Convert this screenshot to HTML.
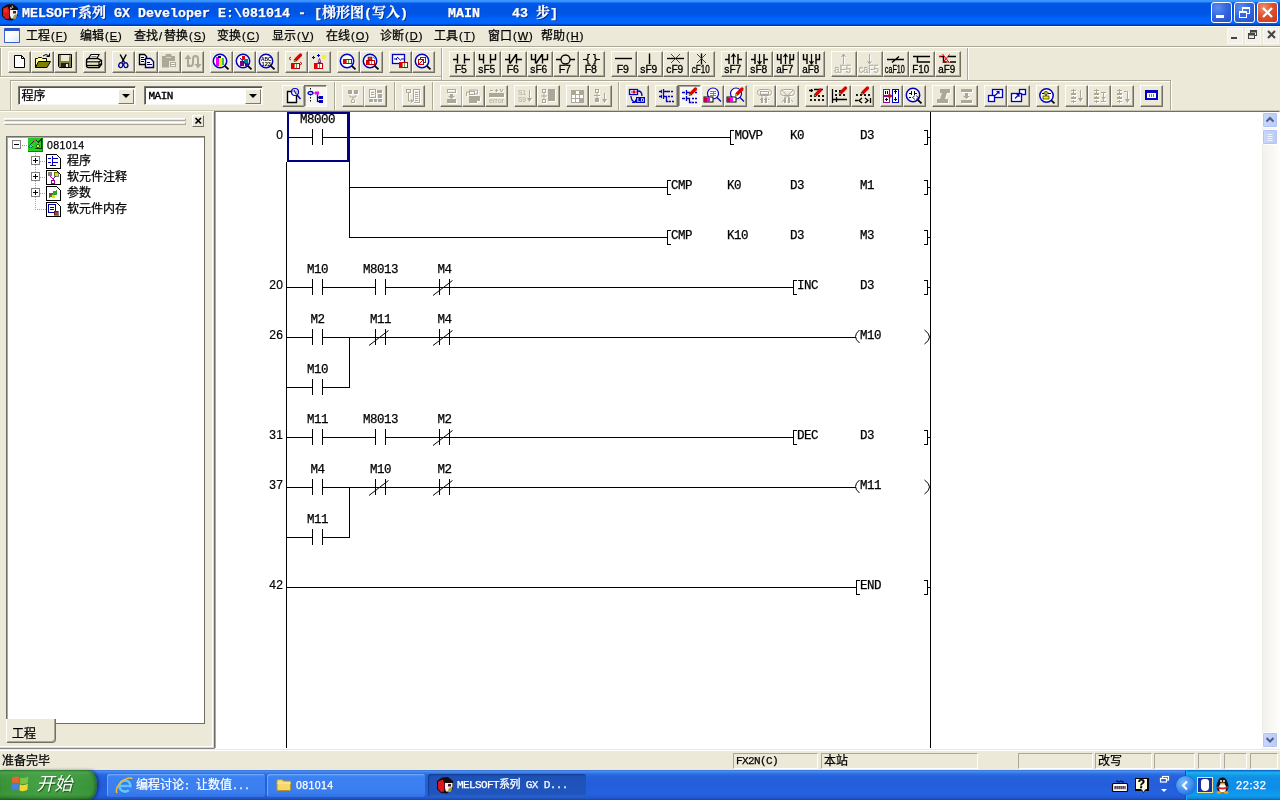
<!DOCTYPE html>
<html lang="zh-CN"><head><meta charset="utf-8"><title>MELSOFT GX Developer</title>
<style>
*{box-sizing:border-box;margin:0;padding:0}
html,body{width:1280px;height:800px;overflow:hidden;background:#ECE9D8}
body{-webkit-text-stroke-width:.25px;position:relative;font-family:"Liberation Sans","Noto Sans CJK SC",sans-serif;font-size:12px;color:#000}
#root{position:absolute;left:0;top:0;width:1280px;height:800px;will-change:transform}
.abs{position:absolute}
#title{left:0;top:0;width:1280px;height:26px;background:linear-gradient(to bottom,#3B97FF 0px,#3B97FF 1.300px,#1A72F2 2.500px,#0559E8 3.500px,#0055E5 5px,#0055E5 14px,#005BEF 16px,#0064FA 19px,#0066FF 23px,#0058E6 24px,#003DB4 25px,#00309C 26px)}
#title .t{left:22px;top:3px;height:20px;line-height:20px;color:#fff;font-weight:bold;font-size:14px;white-space:pre;font-family:"Liberation Serif","Noto Serif CJK SC",serif;text-shadow:1px 1px 0 #0A2A80}
#title .t .l{font-family:"Liberation Mono",monospace;font-size:13.333px;display:inline-block;line-height:20px;transform:scaleY(1.0);transform-origin:0 70%}
.wb{top:2px;width:21px;height:21px;border:1px solid #fff;border-radius:3px;background:radial-gradient(circle at 30% 25%,#5B8DF0 0%,#3667E0 45%,#2250C8 100%)}
.wb.c{background:radial-gradient(circle at 30% 25%,#F09070 0%,#E0502C 45%,#C23A18 100%)}
#menu{left:0;top:26px;width:1280px;height:20px;background:#ECE9D8;border-top:1px solid #fff}
#menu>span{position:absolute;top:2px;height:14px;line-height:14px;font-size:12px;white-space:pre}
.ml{font-family:"Liberation Sans",sans-serif;font-size:11px;letter-spacing:1px;margin-left:1px}
.ml u{text-underline-offset:1px}
.btn{position:absolute;border:1px solid;border-color:#fff #716F64 #716F64 #fff;background:#ECE9D8;box-shadow:inset -1px -1px 0 #ACA899}
.btn.p{border-color:#716F64 #fff #fff #716F64;background:#F8F7F1;box-shadow:inset 1px 1px 0 #ACA899}
.btn svg{position:absolute;left:-1px;top:-1px}
.hl{position:absolute;height:2px;border-top:1px solid #ACA899;border-bottom:1px solid #fff}
.vl{position:absolute;width:2px;border-left:1px solid #ACA899;border-right:1px solid #fff}
.combo{position:absolute;background:#fff;border:1px solid;border-color:#7B7A6E #F6F5EE #F6F5EE #7B7A6E;box-shadow:inset 1px 1px 0 #55544A}
.combo .tx{position:absolute;left:2.500px;top:1.500px;line-height:15px;font-size:12px}
.combo .dd{position:absolute;right:1px;top:2px;width:16px;height:15px;background:#ECE9D8;border:1px solid;border-color:#fff #7B7A6E #7B7A6E #fff}
.combo .dd:after{content:"";position:absolute;left:3px;top:4px;border:4px solid transparent;border-top:4px solid #000;border-bottom:0}
</style></head>
<body>
<div id="root">
<div id="title" class="abs"><svg class="abs" style="left:1px;top:3px" width="18" height="18" viewBox="0 0 18 18"><polygon points="1,5 6,1.500 12,1 17,5 17,12.500 11,17.500 5,17 1,13" fill="#1a0808"/><polygon points="2,5.500 7,3.500 8.500,9 8,15.500 5,16 2,12.500" fill="#D8181C"/><polygon points="3,6 6,5 6.500,9 3.500,10" fill="#F03020"/><path d="M9 7h7.500v3.500l-2 5h-4.500l-1-3z" fill="#F4F0F0"/><path d="M12 8h3v2.500h-3z" fill="#402030"/><path d="M13 12l3.500-1l-2 4.500l-3 .5z" fill="#A8A040"/><path d="M11 2l1.500 2.500l-2 .5z" fill="#A0E0A0"/><path d="M9 4l2 1.500l-1.500 1z" fill="#fff"/></svg><div class="t abs"><span class="l">MELSOFT</span>系列<span class="l"> GX Developer E:\081014 - [</span>梯形图<span class="l">(</span>写入<span class="l">)     MAIN    43 </span>步<span class="l">]</span></div><div class="wb abs" style="left:1211px"><div class="abs" style="left:4px;top:12px;width:8px;height:3px;background:#fff"></div></div><div class="wb abs" style="left:1234px"><div class="abs" style="left:7px;top:4px;width:8px;height:7px;border:1px solid #fff;border-top-width:2px"></div><div class="abs" style="left:4px;top:8px;width:8px;height:7px;border:1px solid #fff;border-top-width:2px;background:#3667E0"></div></div><div class="wb c abs" style="left:1257px"><svg width="19" height="19" viewBox="0 0 19 19"><path d="M5 5L14 14M14 5L5 14" stroke="#fff" stroke-width="2.2"/></svg></div></div>
<div id="menu" class="abs"><div class="abs" style="left:4px;top:1px;width:16px;height:15px;background:linear-gradient(135deg,#fff 40%,#DCE6FA);border:1px solid #3A66D0;border-top:3px solid #2A55C8;border-radius:1px"></div><span style="left:26px">工程<span class="ml">(<u>F</u>)</span></span><span style="left:80px">编辑<span class="ml">(<u>E</u>)</span></span><span style="left:134px">查找<span class="ml" style="margin:0 1px">/</span>替换<span class="ml">(<u>S</u>)</span></span><span style="left:217px">变换<span class="ml">(<u>C</u>)</span></span><span style="left:272px">显示<span class="ml">(<u>V</u>)</span></span><span style="left:326px">在线<span class="ml">(<u>O</u>)</span></span><span style="left:380px">诊断<span class="ml">(<u>D</u>)</span></span><span style="left:434px">工具<span class="ml">(<u>T</u>)</span></span><span style="left:488px">窗口<span class="ml">(<u>W</u>)</span></span><span style="left:541px">帮助<span class="ml">(<u>H</u>)</span></span><div class="abs" style="left:1227px;top:1px;width:16px;height:16px;background:#F2F0E8;border:1px solid #FAF9F5"></div><div class="abs" style="left:1245px;top:1px;width:16px;height:16px;background:#F2F0E8;border:1px solid #FAF9F5"></div><div class="abs" style="left:1263px;top:1px;width:16px;height:16px;background:#F2F0E8;border:1px solid #FAF9F5"></div><svg class="abs" style="left:1224px;top:-2px" width="56" height="18" viewBox="0 0 56 18">
<rect x="7" y="12" width="6" height="2" fill="#444"/>
<g fill="none" stroke="#444"><rect x="26.5" y="5.500" width="6" height="5" /><path d="M26 6.500h7" stroke-width="2"/><rect x="24.500" y="8.500" width="6" height="5" fill="#ECE9D8"/><path d="M24 9.500h7" stroke-width="2"/></g>
<path d="M44 6l7 7M51 6l-7 7" stroke="#444" stroke-width="2"/></svg></div>
<div class="abs" style="left:0px;top:46px;width:1280px;height:1px;background:#ACA899"></div><div class="abs" style="left:0px;top:47px;width:1280px;height:1px;background:#fff"></div><div class="abs" style="left:0px;top:48px;width:1px;height:28px;background:#ACA899"></div><div class="abs" style="left:1px;top:48px;width:1px;height:28px;background:#fff"></div><div class="abs" style="left:0px;top:76px;width:442px;height:1px;background:#ACA899"></div><div class="abs" style="left:0px;top:77px;width:442px;height:1px;background:#fff"></div><div class="abs" style="left:441px;top:48px;width:1px;height:33px;background:#ACA899"></div><div class="abs" style="left:442px;top:48px;width:1px;height:32px;background:#fff"></div><div class="btn" style="left:8px;top:51px;width:23px;height:22px"><svg width="23" height="22" viewBox="0 0 23 22"><path d="M6.500 4.500h7l3 3v9h-10z" fill="#fff" stroke="#000"/><path d="M13.500 4.500v3h3" fill="none" stroke="#000"/></svg></div><div class="btn" style="left:31px;top:51px;width:23px;height:22px"><svg width="23" height="22" viewBox="0 0 23 22"><path d="M4.500 16.500v-9h2l1-1h3l1 1h4v3" fill="#FFFF99" stroke="#000"/><path d="M4.500 16.500l3-6h12l-3.500 6z" fill="#808000" stroke="#000"/><path d="M12 5q3-3 6 0" fill="none" stroke="#000"/><path d="M18.500 2.500v3h-3" fill="none" stroke="#000"/></svg></div><div class="btn" style="left:54px;top:51px;width:23px;height:22px"><svg width="23" height="22" viewBox="0 0 23 22"><path d="M4.500 3.500h13v13h-12l-1-1z" fill="#808040" stroke="#000"/><rect x="7" y="4" width="8" height="6" fill="#ECE9D8"/><rect x="7" y="12" width="8" height="4" fill="#202020"/><rect x="12" y="13" width="2" height="3" fill="#ECE9D8"/><rect x="15.500" y="4.500" width="1" height="1" fill="#fff"/></svg></div><div class="btn" style="left:83px;top:51px;width:23px;height:22px"><svg width="23" height="22" viewBox="0 0 23 22"><path d="M8 3.500h8l-2 4h-8.500z" fill="#fff" stroke="#000" stroke-width="1.200"/><path d="M8.500 5.500h5" stroke="#808080"/><path d="M3.500 10q0-2.500 2-2.500h9l4 2v4l-2.500 3h-10.500q-2 0-2-2z" fill="#F4F2E8" stroke="#000" stroke-width="1.300"/><path d="M4 10.800h12l2.500-1.300M4 14.300h12l2.500-1.800M16 10.800v5.500" stroke="#000" stroke-width="1.200" fill="none"/><path d="M5.500 12.600h9" stroke="#F0F060" stroke-width="1.600"/></svg></div><div class="btn" style="left:112px;top:51px;width:23px;height:22px"><svg width="23" height="22" viewBox="0 0 23 22"><path d="M8.200 3.500l4.300 8M14.200 3.500l-4.300 8" stroke="#000" stroke-width="1.500" fill="none"/><ellipse cx="8.800" cy="14.200" rx="2" ry="2.400" fill="none" stroke="#000090" stroke-width="1.300" transform="rotate(20 8.800 14.200)"/><ellipse cx="13.800" cy="14.200" rx="2" ry="2.400" fill="none" stroke="#000090" stroke-width="1.300" transform="rotate(-20 13.800 14.200)"/></svg></div><div class="btn" style="left:135px;top:51px;width:23px;height:22px"><svg width="23" height="22" viewBox="0 0 23 22"><path d="M4.500 3.500h5l2 2v8h-7z" fill="#fff" stroke="#000" stroke-width="1.400"/><path d="M6 6.500h3M6 8.500h4M6 10.500h3" stroke="#000"/><path d="M10.500 7.500h5l3 3v6h-8z" fill="#fff" stroke="#000060" stroke-width="1.400"/><path d="M12 11.500h3M12 13.500h5" stroke="#000060"/></svg></div><div class="btn" style="left:158px;top:51px;width:23px;height:22px"><svg width="23" height="22" viewBox="0 0 23 22"><path d="M4 5h13v11.500h-13z" fill="#ACA899"/><rect x="7.500" y="3" width="6" height="3.500" rx="1" fill="#ACA899"/><path d="M8 6.500h5" stroke="#D8D4C4"/><rect x="11.500" y="10.500" width="7" height="6" fill="#ACA899" stroke="#ECE9D8"/><path d="M13 12.500h4M13 14.500h4" stroke="#fff"/></svg></div><div class="btn" style="left:181px;top:51px;width:23px;height:22px"><svg width="23" height="22" viewBox="0 0 23 22"><path d="M7 16v-9.500M7 12q0 3 2.500 3t2.500-3v-4q0-3 2.500-3t2.500 3v6" fill="none" stroke="#ACA899" stroke-width="2"/><path d="M3.500 8l3.500-4.500l3.500 4.500zM13.500 13l3.500 4.500l3.500-4.500z" fill="#ACA899"/></svg></div><div class="btn" style="left:210px;top:51px;width:23px;height:22px"><svg width="23" height="22" viewBox="0 0 23 22"><circle cx="10" cy="10" r="6.7" fill="#fff" stroke="#0000C0" stroke-width="1.5"/><rect x="6" y="6" width="3" height="9" fill="#F000F0"/><rect x="9" y="7" width="3" height="9" fill="#F0F000"/><rect x="12" y="7" width="2" height="7" fill="#40C040"/><rect x="8" y="5" width="3" height="2" fill="#000080"/><path d="M14.824 14.824L18.500 18.300" stroke="#000" stroke-width="1.800"/></svg></div><div class="btn" style="left:233px;top:51px;width:23px;height:22px"><svg width="23" height="22" viewBox="0 0 23 22"><circle cx="10" cy="10" r="6.7" fill="#fff" stroke="#0000C0" stroke-width="1.5"/><path d="M9 5h3v4h-3z" fill="#E00000"/><path d="M11 8h4v4h-4z" fill="#008080"/><path d="M7 10h4v5h-4zM12 12h3v3h-3z" fill="#800080"/><path d="M7 7l8 9" stroke="#000080"/><path d="M14.824 14.824L18.500 18.300" stroke="#000" stroke-width="1.800"/></svg></div><div class="btn" style="left:256px;top:51px;width:23px;height:22px"><svg width="23" height="22" viewBox="0 0 23 22"><circle cx="10" cy="10" r="6.7" fill="#fff" stroke="#0000C0" stroke-width="1.5"/><g font-family="'Liberation Sans',sans-serif" font-size="6.200" font-weight="bold" fill="#000"><text x="5" y="9.800" textLength="10.500" lengthAdjust="spacingAndGlyphs">ABC</text><text x="5.500" y="15" textLength="9.500" lengthAdjust="spacingAndGlyphs">123</text></g><path d="M14.824 14.824L18.500 18.300" stroke="#000" stroke-width="1.800"/></svg></div><div class="btn" style="left:285px;top:51px;width:23px;height:22px"><svg width="23" height="22" viewBox="0 0 23 22"><path d="M11 8.5L15.5 4" stroke="#E00000" stroke-width="3.2" stroke-linecap="round"/><path d="M9 10.5l2.500 -0.500l-2 -2z" fill="#FFE000" stroke="#000" stroke-width=".5"/><rect x="6.5" y="12.5" width="8" height="5" fill="#fff" stroke="#C00000"/><rect x="6" y="12" width="3.6" height="6" fill="#E00000"/><path d="M11.58 13v4" stroke="#40A040"/><path d="M6 6l-2 1.500l2 1.500M15 11l2 1.500l-2 1.500" fill="none" stroke="#E00000"/></svg></div><div class="btn" style="left:308px;top:51px;width:23px;height:22px"><svg width="23" height="22" viewBox="0 0 23 22"><rect x="6.5" y="12.5" width="8" height="5" fill="#fff" stroke="#C00000"/><rect x="6" y="12" width="3.6" height="6" fill="#E00000"/><path d="M11.58 13v4" stroke="#40A040"/><path d="M10 11.500h3l-1.500-4z" fill="#FFE000" stroke="#800080" stroke-width=".8"/><path d="M11.500 11v2" stroke="#800080"/><circle cx="16" cy="6" r="2.200" fill="#F0F040"/><path d="M5.500 5v3M4 6.500h3M10.500 3v3M9 4.500h3" stroke="#0000C0"/></svg></div><div class="btn" style="left:337px;top:51px;width:23px;height:22px"><svg width="23" height="22" viewBox="0 0 23 22"><circle cx="10" cy="10" r="6.7" fill="#fff" stroke="#0000C0" stroke-width="1.5"/><rect x="6.5" y="8.5" width="8" height="4" fill="#fff" stroke="#C00000"/><rect x="6" y="8" width="3.6" height="5" fill="#E00000"/><path d="M11.58 9v3" stroke="#40A040"/><path d="M14.824 14.824L18.500 18.300" stroke="#000" stroke-width="1.800"/></svg></div><div class="btn" style="left:360px;top:51px;width:23px;height:22px"><svg width="23" height="22" viewBox="0 0 23 22"><circle cx="10" cy="10" r="6.7" fill="#fff" stroke="#0000C0" stroke-width="1.5"/><rect x="6.5" y="9.5" width="8" height="4" fill="#fff" stroke="#C00000"/><rect x="6" y="9" width="3.6" height="5" fill="#E00000"/><path d="M11.58 10v3" stroke="#40A040"/><rect x="8" y="6" width="4" height="3" fill="#E04020" stroke="#000" stroke-width=".5"/><path d="M13 6l2 2" stroke="#40A0E0"/><path d="M14.824 14.824L18.500 18.300" stroke="#000" stroke-width="1.800"/></svg></div><div class="btn" style="left:389px;top:51px;width:23px;height:22px"><svg width="23" height="22" viewBox="0 0 23 22"><rect x="3.500" y="3.500" width="12" height="9" fill="#fff" stroke="#0000C0" stroke-width="1.300"/><path d="M5 8h3M8 6l4 3.500M12 8h3" stroke="#0000C0" fill="none"/><path d="M7 6.500l1.500 1.500l-1.500 1.500z" fill="#0000C0"/><rect x="10.5" y="11.5" width="8" height="5" fill="#fff" stroke="#C00000"/><rect x="10" y="11" width="3.6" height="6" fill="#E00000"/><path d="M15.58 12v4" stroke="#40A040"/></svg></div><div class="btn" style="left:412px;top:51px;width:23px;height:22px"><svg width="23" height="22" viewBox="0 0 23 22"><circle cx="10" cy="10" r="6.7" fill="#fff" stroke="#0000C0" stroke-width="1.5"/><rect x="8.500" y="6.500" width="5" height="5" fill="#fff" stroke="#404040"/><rect x="6.500" y="8.500" width="5" height="5" fill="#fff" stroke="#C00000"/><path d="M7 13l4-4" stroke="#E00000"/><path d="M14.824 14.824L18.500 18.300" stroke="#000" stroke-width="1.800"/></svg></div><div class="btn" style="left:449px;top:51px;width:26px;height:26px"><svg width="26" height="26" viewBox="0 0 26 26"><path d="M4 8.500h4.500M15.500 8.500h5.500M8.500 3v9.500M15.500 3v9.500" stroke="#000" stroke-width="1.4" fill="none" /><text x="11.800" y="21.500" text-anchor="middle" font-family="'Liberation Sans',sans-serif" font-size="10.500" fill="#000" stroke="#000" stroke-width=".3">F5</text></svg></div><div class="btn" style="left:475px;top:51px;width:26px;height:26px"><svg width="26" height="26" viewBox="0 0 26 26"><path d="M4.500 3v5.500h4M8.500 3v9.500M15.500 3v9.500M15.500 8.500h5v-5.500" stroke="#000" stroke-width="1.4" fill="none" /><text x="11.800" y="21.500" text-anchor="middle" font-family="'Liberation Sans',sans-serif" font-size="10.500" fill="#000" stroke="#000" stroke-width=".3" textLength="17" lengthAdjust="spacingAndGlyphs">sF5</text></svg></div><div class="btn" style="left:501px;top:51px;width:26px;height:26px"><svg width="26" height="26" viewBox="0 0 26 26"><path d="M4 8.500h4.500M15.500 8.500h5.500M8.500 3v9.500M15.500 3v9.500M9 12.500L15 3.500" stroke="#000" stroke-width="1.4" fill="none" /><text x="11.800" y="21.500" text-anchor="middle" font-family="'Liberation Sans',sans-serif" font-size="10.500" fill="#000" stroke="#000" stroke-width=".3">F6</text></svg></div><div class="btn" style="left:527px;top:51px;width:26px;height:26px"><svg width="26" height="26" viewBox="0 0 26 26"><path d="M4.500 3v5.500h4M8.500 3v9.500M15.500 3v9.500M15.500 8.500h5v-5.500M9 12.500L15 3.500" stroke="#000" stroke-width="1.4" fill="none" /><text x="11.800" y="21.500" text-anchor="middle" font-family="'Liberation Sans',sans-serif" font-size="10.500" fill="#000" stroke="#000" stroke-width=".3" textLength="17" lengthAdjust="spacingAndGlyphs">sF6</text></svg></div><div class="btn" style="left:553px;top:51px;width:26px;height:26px"><svg width="26" height="26" viewBox="0 0 26 26"><path d="M3 8.500h5M17 8.500h5" stroke="#000" stroke-width="1.4" fill="none" /><circle cx="12.500" cy="8.500" r="4.500" fill="none" stroke="#000" stroke-width="1.300"/><text x="11.800" y="21.500" text-anchor="middle" font-family="'Liberation Sans',sans-serif" font-size="10.500" fill="#000" stroke="#000" stroke-width=".3">F7</text></svg></div><div class="btn" style="left:579px;top:51px;width:26px;height:26px"><svg width="26" height="26" viewBox="0 0 26 26"><path d="M4 8.500h3.500M17.500 8.500h3.500M11 3.500h-2v3.500l-1.500 1.500l1.500 1.500v3h2M14 3.500h2v3.500l1.500 1.500l-1.500 1.500v3h-2" stroke="#000" stroke-width="1.2" fill="none" /><text x="11.800" y="21.500" text-anchor="middle" font-family="'Liberation Sans',sans-serif" font-size="10.500" fill="#000" stroke="#000" stroke-width=".3">F8</text></svg></div><div class="btn" style="left:611px;top:51px;width:26px;height:26px"><svg width="26" height="26" viewBox="0 0 26 26"><path d="M4 7.500h17" stroke="#000" stroke-width="1.4" fill="none" /><text x="11.800" y="21.500" text-anchor="middle" font-family="'Liberation Sans',sans-serif" font-size="10.500" fill="#000" stroke="#000" stroke-width=".3">F9</text></svg></div><div class="btn" style="left:637px;top:51px;width:26px;height:26px"><svg width="26" height="26" viewBox="0 0 26 26"><path d="M12.500 2.500v10.500" stroke="#000" stroke-width="1.4" fill="none" /><text x="11.800" y="21.500" text-anchor="middle" font-family="'Liberation Sans',sans-serif" font-size="10.500" fill="#000" stroke="#000" stroke-width=".3" textLength="17" lengthAdjust="spacingAndGlyphs">sF9</text></svg></div><div class="btn" style="left:663px;top:51px;width:26px;height:26px"><svg width="26" height="26" viewBox="0 0 26 26"><path d="M4 7.500h17" stroke="#000" stroke-width="1.4" fill="none" /><path d="M8 3l9 9M17 3l-9 9" stroke="#E00000" stroke-width="1" fill="none" /><text x="11.800" y="21.500" text-anchor="middle" font-family="'Liberation Sans',sans-serif" font-size="10.500" fill="#000" stroke="#000" stroke-width=".3" textLength="17" lengthAdjust="spacingAndGlyphs">cF9</text></svg></div><div class="btn" style="left:689px;top:51px;width:26px;height:26px"><svg width="26" height="26" viewBox="0 0 26 26"><path d="M12.500 2.500v11" stroke="#000" stroke-width="1.4" fill="none" /><path d="M8 3l9 9M17 3l-9 9" stroke="#E00000" stroke-width="1" fill="none" /><text x="11.800" y="21.500" text-anchor="middle" font-family="'Liberation Sans',sans-serif" font-size="10.500" fill="#000" stroke="#000" stroke-width=".3" textLength="18" lengthAdjust="spacingAndGlyphs">cF10</text></svg></div><div class="btn" style="left:721px;top:51px;width:26px;height:26px"><svg width="26" height="26" viewBox="0 0 26 26"><path d="M4 8.500h4M17 8.500h4M8 3v10M17 3v10" stroke="#000" stroke-width="1.4" fill="none" /><path d="M12.500 13v-10M10.500 6l2-3l2 3" stroke="#000" stroke-width="1.2" fill="none" /><text x="11.800" y="21.500" text-anchor="middle" font-family="'Liberation Sans',sans-serif" font-size="10.500" fill="#000" stroke="#000" stroke-width=".3" textLength="17" lengthAdjust="spacingAndGlyphs">sF7</text></svg></div><div class="btn" style="left:747px;top:51px;width:26px;height:26px"><svg width="26" height="26" viewBox="0 0 26 26"><path d="M4 8.500h4M17 8.500h4M8 3v10M17 3v10" stroke="#000" stroke-width="1.4" fill="none" /><path d="M12.500 3v10M10.500 10l2 3l2-3" stroke="#000" stroke-width="1.2" fill="none" /><text x="11.800" y="21.500" text-anchor="middle" font-family="'Liberation Sans',sans-serif" font-size="10.500" fill="#000" stroke="#000" stroke-width=".3" textLength="17" lengthAdjust="spacingAndGlyphs">sF8</text></svg></div><div class="btn" style="left:773px;top:51px;width:26px;height:26px"><svg width="26" height="26" viewBox="0 0 26 26"><path d="M4.500 3v5.500h3.500M8 3v10M17 3v10M17 8.500h3.500v-5.500" stroke="#000" stroke-width="1.4" fill="none" /><path d="M12.500 13v-10M10.500 6l2-3l2 3" stroke="#000" stroke-width="1.2" fill="none" /><text x="11.800" y="21.500" text-anchor="middle" font-family="'Liberation Sans',sans-serif" font-size="10.500" fill="#000" stroke="#000" stroke-width=".3" textLength="17" lengthAdjust="spacingAndGlyphs">aF7</text></svg></div><div class="btn" style="left:799px;top:51px;width:26px;height:26px"><svg width="26" height="26" viewBox="0 0 26 26"><path d="M4.500 3v5.500h3.500M8 3v10M17 3v10M17 8.500h3.500v-5.500" stroke="#000" stroke-width="1.4" fill="none" /><path d="M12.500 3v10M10.500 10l2 3l2-3" stroke="#000" stroke-width="1.2" fill="none" /><text x="11.800" y="21.500" text-anchor="middle" font-family="'Liberation Sans',sans-serif" font-size="10.500" fill="#000" stroke="#000" stroke-width=".3" textLength="17" lengthAdjust="spacingAndGlyphs">aF8</text></svg></div><div class="btn" style="left:831px;top:51px;width:26px;height:26px"><svg width="26" height="26" viewBox="0 0 26 26"><path d="M13.500 14v-10M11.500 7l2-3l2 3" stroke="#fff" stroke-width="1" fill="none" /><path d="M12.500 13v-10M10.500 6l2-3l2 3" stroke="#ACA899" stroke-width="1" fill="none" /><text x="11.800" y="21.500" text-anchor="middle" font-family="'Liberation Sans',sans-serif" font-size="10.500" fill="#ACA899" stroke="#ACA899" stroke-width=".3" textLength="17" lengthAdjust="spacingAndGlyphs" style="text-shadow:1px 1px 0 #fff">aF5</text></svg></div><div class="btn" style="left:857px;top:51px;width:26px;height:26px"><svg width="26" height="26" viewBox="0 0 26 26"><path d="M13.500 4v10M11.500 11l2 3l2-3" stroke="#fff" stroke-width="1" fill="none" /><path d="M12.500 3v10M10.500 10l2 3l2-3" stroke="#ACA899" stroke-width="1" fill="none" /><text x="11.800" y="21.500" text-anchor="middle" font-family="'Liberation Sans',sans-serif" font-size="10.500" fill="#ACA899" stroke="#ACA899" stroke-width=".3" textLength="20" lengthAdjust="spacingAndGlyphs" style="text-shadow:1px 1px 0 #fff">caF5</text></svg></div><div class="btn" style="left:883px;top:51px;width:26px;height:26px"><svg width="26" height="26" viewBox="0 0 26 26"><path d="M4 8.500h17M9 11.500l7-6" stroke="#000" stroke-width="1.4" fill="none" /><text x="11.800" y="21.500" text-anchor="middle" font-family="'Liberation Sans',sans-serif" font-size="10.500" fill="#000" stroke="#000" stroke-width=".3" textLength="20" lengthAdjust="spacingAndGlyphs">caF10</text></svg></div><div class="btn" style="left:909px;top:51px;width:26px;height:26px"><svg width="26" height="26" viewBox="0 0 26 26"><path d="M4 5.500h17M8.500 5.500v5.500h12.500" stroke="#000" stroke-width="1.4" fill="none" /><text x="11.800" y="21.500" text-anchor="middle" font-family="'Liberation Sans',sans-serif" font-size="10.500" fill="#000" stroke="#000" stroke-width=".3" textLength="17" lengthAdjust="spacingAndGlyphs">F10</text></svg></div><div class="btn" style="left:935px;top:51px;width:26px;height:26px"><svg width="26" height="26" viewBox="0 0 26 26"><path d="M4 5.500h5M13 5.500h8M8.500 5.500v5.500h3M15 11h6" stroke="#000" stroke-width="1.4" fill="none" /><path d="M7.500 3l7 9M14.500 3.500l-6.500 8M4 5.500h2M11 11h3" stroke="#E00000" stroke-width="1" fill="none" /><text x="11.800" y="21.500" text-anchor="middle" font-family="'Liberation Sans',sans-serif" font-size="10.500" fill="#000" stroke="#000" stroke-width=".3" textLength="17" lengthAdjust="spacingAndGlyphs">aF9</text></svg></div><div class="abs" style="left:967px;top:48px;width:1px;height:33px;background:#ACA899"></div><div class="abs" style="left:968px;top:48px;width:1px;height:32px;background:#fff"></div><div class="abs" style="left:10px;top:80px;width:1161px;height:1px;background:#ACA899"></div><div class="abs" style="left:11px;top:81px;width:1159px;height:1px;background:#fff"></div><div class="abs" style="left:10px;top:80px;width:1px;height:31px;background:#ACA899"></div><div class="abs" style="left:11px;top:81px;width:1px;height:30px;background:#fff"></div><div class="abs" style="left:1170px;top:81px;width:1px;height:30px;background:#ACA899"></div><div class="abs" style="left:1171px;top:81px;width:1px;height:30px;background:#fff"></div><div class="combo" style="left:18px;top:86px;width:118px;height:19px"><div class="tx">程序</div><div class="dd"></div></div><div class="combo" style="left:144px;top:86px;width:119px;height:19px"><div class="tx" style="font-family:'Liberation Mono',monospace;font-size:11px;letter-spacing:-.5px;-webkit-text-stroke-width:.4px;left:3.500px">MAIN</div><div class="dd"></div></div><div class="btn" style="left:282px;top:85px;width:23px;height:22px"><svg width="23" height="22" viewBox="0 0 23 22"><path d="M5.500 6.500h9v11h-9z" fill="#fff" stroke="#000" stroke-width="1.400"/><circle cx="13" cy="7" r="3.500" fill="#fff" fill-opacity=".7" stroke="#0000C0" stroke-width="1.200"/><path d="M12 5l2 4" stroke="#0000C0"/><path d="M15 10l3.500 4" stroke="#0000C0" stroke-width="1.500"/></svg></div><div class="btn p" style="left:304px;top:85px;width:23px;height:22px"><svg width="23" height="22" viewBox="0 0 23 22"><path d="M6.500 3v15" stroke="#000" stroke-dasharray="1.500 1.500"/><ellipse cx="6.500" cy="8" rx="2.500" ry="1.500" fill="#fff" stroke="#0000C0" stroke-width="1.300"/><path d="M9 8h3" stroke="#F000F0"/><rect x="11" y="6.500" width="4" height="3" fill="#F000F0"/><path d="M13.500 9.500v7.500M13.500 12.500h2M13.500 16.500h2" stroke="#0000C0" fill="none" stroke-width="1.300"/><rect x="15" y="11" width="4" height="3" fill="#0000C0"/><rect x="15" y="15" width="4" height="3" fill="#0000C0"/></svg></div><div class="btn" style="left:342px;top:85px;width:23px;height:22px"><svg width="23" height="22" viewBox="0 0 23 22"><g transform="translate(1 1)" stroke="#fff" fill="none"><path d="M8 9v3h6v-3M11 12v2"/><path d="M9.500 15.500q0-1.500 1.500-1.500t1.500 1.500v2h-3z"/></g><g stroke="#ACA899" fill="none"><path d="M8 9v3h6v-3M11 12v2"/><path d="M9.500 15.500q0-1.500 1.500-1.500t1.500 1.500v2h-3z"/></g><g transform="translate(1 1)" fill="#fff"><rect x="6" y="5" width="4" height="4"/><rect x="12" y="5" width="4" height="4"/></g><g fill="#ACA899"><rect x="6" y="5" width="4" height="4"/><rect x="12" y="5" width="4" height="4"/></g></svg></div><div class="btn" style="left:364px;top:85px;width:23px;height:22px"><svg width="23" height="22" viewBox="0 0 23 22"><g transform="translate(1 1)" stroke="#fff" fill="none"><rect x="5.500" y="4.500" width="6" height="8"/><path d="M7 7.500h3M7 9.500h3"/></g><g stroke="#ACA899" fill="none"><rect x="5.500" y="4.500" width="6" height="8"/><path d="M7 7.500h3M7 9.500h3"/></g><g transform="translate(1 1)" fill="#fff"><path d="M13 5h5v3h-5zM14 9h4v4h-4zM5 14h4v3h-4zM10 14h3v3h-3zM14 14h4v3h-4z"/></g><g fill="#ACA899"><path d="M13 5h5v3h-5zM14 9h4v4h-4zM5 14h4v3h-4zM10 14h3v3h-3zM14 14h4v3h-4z"/></g></svg></div><div class="btn" style="left:402px;top:85px;width:23px;height:22px"><svg width="23" height="22" viewBox="0 0 23 22"><g transform="translate(1 1)" stroke="#fff" fill="none"><rect x="4.500" y="4.500" width="4" height="3"/><path d="M6.500 8v8h4"/><rect x="11.500" y="4.500" width="6" height="13"/><path d="M13 7.500h3M13 9.500h3M13 11.500h3M13 13.500h3M13 15.500h3"/></g><g stroke="#ACA899" fill="none"><rect x="4.500" y="4.500" width="4" height="3"/><path d="M6.500 8v8h4"/><rect x="11.500" y="4.500" width="6" height="13"/><path d="M13 7.500h3M13 9.500h3M13 11.500h3M13 13.500h3M13 15.500h3"/></g><g transform="translate(1 1)" fill="#fff"><path d="M9 14l2.500 2l-2.500 2z"/></g><g fill="#ACA899"><path d="M9 14l2.500 2l-2.500 2z"/></g></svg></div><div class="btn" style="left:440px;top:85px;width:23px;height:22px"><svg width="23" height="22" viewBox="0 0 23 22"><g transform="translate(1 1)" stroke="#fff" fill="none"><rect x="7.500" y="4.500" width="8" height="3"/></g><g stroke="#ACA899" fill="none"><rect x="7.500" y="4.500" width="8" height="3"/></g><g transform="translate(1 1)" fill="#fff"><path d="M10 9h3v2h2l-3.500 3l-3.500-3h2zM7 14h9v4h-9z"/></g><g fill="#ACA899"><path d="M10 9h3v2h2l-3.500 3l-3.500-3h2zM7 14h9v4h-9z"/></g></svg></div><div class="btn" style="left:462px;top:85px;width:23px;height:22px"><svg width="23" height="22" viewBox="0 0 23 22"><g transform="translate(1 1)" stroke="#fff" fill="none"><path d="M4.500 11v-4h3v-2h8v4h-3"/><rect x="7.500" y="6.500" width="5" height="3"/></g><g stroke="#ACA899" fill="none"><path d="M4.500 11v-4h3v-2h8v4h-3"/><rect x="7.500" y="6.500" width="5" height="3"/></g><g transform="translate(1 1)" fill="#fff"><path d="M7 11h11v5h-3v2h-8z"/></g><g fill="#ACA899"><path d="M7 11h11v5h-3v2h-8z"/></g></svg></div><div class="btn" style="left:485px;top:85px;width:23px;height:22px"><svg width="23" height="22" viewBox="0 0 23 22"><g transform="translate(1 1)" stroke="#fff" fill="none"><path d="M5 5.500h3M10 5.500h3M11.500 4v3M15 4l1.500 3l1.500-3"/></g><g stroke="#ACA899" fill="none"><path d="M5 5.500h3M10 5.500h3M11.500 4v3M15 4l1.500 3l1.500-3"/></g><g transform="translate(1 1)" fill="#fff"><rect x="4" y="8" width="15" height="4"/></g><g fill="#ACA899"><rect x="4" y="8" width="15" height="4"/></g><text x="4" y="18" font-family="'Liberation Sans',sans-serif" font-size="6.500" fill="#ACA899" textLength="15" lengthAdjust="spacingAndGlyphs">error</text></svg></div><div class="btn" style="left:514px;top:85px;width:23px;height:22px"><svg width="23" height="22" viewBox="0 0 23 22"><g font-family="'Liberation Sans',sans-serif" font-size="7" fill="#ACA899"><text x="4" y="10" textLength="8" lengthAdjust="spacingAndGlyphs">S1</text><text x="4" y="17" textLength="8" lengthAdjust="spacingAndGlyphs">S9</text></g><g transform="translate(1 1)" stroke="#fff" fill="none"><path d="M15.500 5v11"/></g><g stroke="#ACA899" fill="none"><path d="M15.500 5v11"/></g><g transform="translate(1 1)" fill="#fff"><path d="M13 13h5l-2.500 4z"/></g><g fill="#ACA899"><path d="M13 13h5l-2.500 4z"/></g></svg></div><div class="btn" style="left:537px;top:85px;width:23px;height:22px"><svg width="23" height="22" viewBox="0 0 23 22"><g transform="translate(1 1)" stroke="#fff" fill="none"><rect x="5.500" y="4.500" width="3" height="3"/><rect x="5.500" y="14.500" width="3" height="3"/><path d="M7 8v6M4 11h6"/></g><g stroke="#ACA899" fill="none"><rect x="5.500" y="4.500" width="3" height="3"/><rect x="5.500" y="14.500" width="3" height="3"/><path d="M7 8v6M4 11h6"/></g><g transform="translate(1 1)" fill="#fff"><rect x="11" y="4" width="7" height="12"/></g><g fill="#ACA899"><rect x="11" y="4" width="7" height="12"/></g></svg></div><div class="btn" style="left:566px;top:85px;width:23px;height:22px"><svg width="23" height="22" viewBox="0 0 23 22"><rect x="5" y="5" width="13" height="13" fill="#ACA899"/><path d="M10 6h3v3h-3zM6 10h3v3h-3zM10 10h3v3h-3zM14 10h3v3h-3zM6 14h3v3h-3zM10 14h3v3h-3z" fill="#fff"/></svg></div><div class="btn" style="left:589px;top:85px;width:23px;height:22px"><svg width="23" height="22" viewBox="0 0 23 22"><g transform="translate(1 1)" stroke="#fff" fill="none"><rect x="6.500" y="4.500" width="3" height="3"/><path d="M8 8v5M5 10.500h6M15.500 8v8"/></g><g stroke="#ACA899" fill="none"><rect x="6.500" y="4.500" width="3" height="3"/><path d="M8 8v5M5 10.500h6M15.500 8v8"/></g><g transform="translate(1 1)" fill="#fff"><rect x="6" y="13" width="4" height="4"/><path d="M13 14h5l-2.500 4z"/></g><g fill="#ACA899"><rect x="6" y="13" width="4" height="4"/><path d="M13 14h5l-2.500 4z"/></g></svg></div><div class="btn" style="left:626px;top:85px;width:23px;height:22px"><svg width="23" height="22" viewBox="0 0 23 22"><rect x="3.500" y="4.500" width="8" height="5" fill="#fff" stroke="#0000C0" stroke-width="1.300"/><path d="M5 7h2M9 7h2M7.500 5.500v3M8.500 5.500v3" stroke="#E00000"/><path d="M12 6q4 0 4 5" stroke="#0000C0" fill="none" stroke-width="1.300"/><path d="M5 11q0 5 4 6" stroke="#0000C0" fill="none" stroke-width="1.300"/><path d="M6 17.500h3.500v-3" stroke="#0000C0" fill="none"/><rect x="10" y="12" width="9" height="6" fill="#0000C0"/><text x="11" y="17.300" font-family="'Liberation Sans',sans-serif" font-size="6" font-weight="bold" fill="#fff">L0</text></svg></div><div class="btn" style="left:655px;top:85px;width:23px;height:22px"><svg width="23" height="22" viewBox="0 0 23 22"><path d="M4 6.500h3M8.500 4v5M9 6.500h4M4 11.500h3M8.500 9v5M9 11.500h2.500v5h2" stroke="#0000C0" fill="none" stroke-width="1.300"/><path d="M13 6.500h6M13 11.500h6M14 16.500h5" stroke="#0000C0" stroke-dasharray="2 1" stroke-width="1.300"/><path d="M7 4.500l-2 2l2 2M7 9.500l-2 2l2 2" fill="#0000C0"/></svg></div><div class="btn p" style="left:678px;top:85px;width:23px;height:22px"><svg width="23" height="22" viewBox="0 0 23 22"><path d="M4 7.500h3M8.500 5v5M9 7.500h3M4 13.500h3M8.500 11v5M9 13.500h2.500v4h2" stroke="#0000C0" fill="none" stroke-width="1.300"/><path d="M14 13.500h5M14 17.500h5M17 7.500h3" stroke="#0000C0" stroke-dasharray="2 1" stroke-width="1.300"/><path d="M13 8.5L17.5 4" stroke="#E00000" stroke-width="3.2" stroke-linecap="round"/><path d="M11 10.5l2.500 -0.500l-2 -2z" fill="#FFE000" stroke="#000" stroke-width=".5"/></svg></div><div class="btn" style="left:701px;top:85px;width:23px;height:22px"><svg width="23" height="22" viewBox="0 0 23 22"><circle cx="12" cy="8.500" r="5.500" fill="#fff" stroke="#0000C0" stroke-width="1.200"/><path d="M9 6.500h6M9 8.500h6M9 10.500h6M12.500 6v5" stroke="#808080"/><path d="M16 12.500l4 4" stroke="#0000C0" stroke-width="1.300"/><rect x="3" y="12" width="9" height="5" fill="#fff" stroke="#000"/><rect x="3" y="12.500" width="3" height="4.500" fill="#C00040"/><rect x="6" y="12.500" width="3" height="4.500" fill="#F000F0"/></svg></div><div class="btn" style="left:724px;top:85px;width:23px;height:22px"><svg width="23" height="22" viewBox="0 0 23 22"><circle cx="12" cy="8.500" r="5.500" fill="#fff" stroke="#0000C0" stroke-width="1.200"/><path d="M16 12.500l4 4" stroke="#0000C0" stroke-width="1.300"/><rect x="3" y="12" width="9" height="5" fill="#fff" stroke="#000"/><rect x="3" y="12.500" width="3" height="4.500" fill="#C00040"/><rect x="6" y="12.500" width="3" height="4.500" fill="#F000F0"/><path d="M13.5 8.5L18 4" stroke="#E00000" stroke-width="3.2" stroke-linecap="round"/><path d="M11.5 10.5l2.500 -0.500l-2 -2z" fill="#FFE000" stroke="#000" stroke-width=".5"/></svg></div><div class="btn" style="left:753px;top:85px;width:23px;height:22px"><svg width="23" height="22" viewBox="0 0 23 22"><g transform="translate(1 1)" stroke="#fff" fill="none"><rect x="4.500" y="4.500" width="14" height="6" rx="3"/><rect x="7.500" y="6.500" width="8" height="3"/><path d="M9 11v6M13 11v6M7 14.500h9"/></g><g stroke="#ACA899" fill="none"><rect x="4.500" y="4.500" width="14" height="6" rx="3"/><rect x="7.500" y="6.500" width="8" height="3"/><path d="M9 11v6M13 11v6M7 14.500h9"/></g><g transform="translate(1 1)" fill="#fff"><rect x="8" y="13" width="2" height="5"/><rect x="12" y="13" width="2" height="5"/></g><g fill="#ACA899"><rect x="8" y="13" width="2" height="5"/><rect x="12" y="13" width="2" height="5"/></g></svg></div><div class="btn" style="left:776px;top:85px;width:23px;height:22px"><svg width="23" height="22" viewBox="0 0 23 22"><g transform="translate(1 1)" stroke="#fff" fill="none"><rect x="4.500" y="4.500" width="14" height="6" rx="3"/><path d="M6 5l11 12M17 5l-11 12"/><path d="M9 11v6M13 11v6"/></g><g stroke="#ACA899" fill="none"><rect x="4.500" y="4.500" width="14" height="6" rx="3"/><path d="M6 5l11 12M17 5l-11 12"/><path d="M9 11v6M13 11v6"/></g><g transform="translate(1 1)" fill="#fff"><rect x="8" y="13" width="2" height="5"/><rect x="12" y="13" width="2" height="5"/></g><g fill="#ACA899"><rect x="8" y="13" width="2" height="5"/><rect x="12" y="13" width="2" height="5"/></g></svg></div><div class="btn" style="left:805px;top:85px;width:23px;height:22px"><svg width="23" height="22" viewBox="0 0 23 22"><path d="M4 5.500h4M6.500 4v3M9 4.500h9" stroke="#000" stroke-width="1.300"/><g stroke="#000" stroke-width=".9"><path d="M5 10l2 2m0-2l-2 2M9 10l2 2m0-2l-2 2M13 10l2 2m0-2l-2 2M17 10l2 2m0-2l-2 2M5 14l2 2m0-2l-2 2M9 14l2 2m0-2l-2 2M13 14l2 2m0-2l-2 2M17 14l2 2m0-2l-2 2"/></g><path d="M11 9.5L15.5 5" stroke="#E00000" stroke-width="3.2" stroke-linecap="round"/><path d="M9 11.5l2.500 -0.500l-2 -2z" fill="#FFE000" stroke="#000" stroke-width=".5"/></svg></div><div class="btn" style="left:828px;top:85px;width:23px;height:22px"><svg width="23" height="22" viewBox="0 0 23 22"><path d="M4.500 4v14M8.500 12v5M5 14.500h14" stroke="#000" stroke-width="1.300"/><g stroke="#000" stroke-width=".9"><path d="M7 5l2 2m0-2l-2 2M11 5l2 2m0-2l-2 2M7 9l2 2m0-2l-2 2M11 9l2 2m0-2l-2 2M15 9l2 2m0-2l-2 2"/></g><path d="M13 7.5L17.5 3" stroke="#E00000" stroke-width="3.2" stroke-linecap="round"/><path d="M11 9.5l2.500 -0.500l-2 -2z" fill="#FFE000" stroke="#000" stroke-width=".5"/></svg></div><div class="btn" style="left:851px;top:85px;width:23px;height:22px"><svg width="23" height="22" viewBox="0 0 23 22"><g stroke="#000" stroke-width=".9"><path d="M5 9l2 2m0-2l-2 2M9 9l2 2m0-2l-2 2M13 9l2 2m0-2l-2 2M17 9l2 2m0-2l-2 2"/></g><path d="M4 15.500h3M11 13l-3 2.500l3 2.500M14 13l3 2.500l-3 2.500M19.500 13v5" stroke="#000" stroke-width="1.300" fill="none"/><path d="M12 7.5L16.5 3" stroke="#E00000" stroke-width="3.2" stroke-linecap="round"/><path d="M10 9.5l2.500 -0.500l-2 -2z" fill="#FFE000" stroke="#000" stroke-width=".5"/></svg></div><div class="btn" style="left:880px;top:85px;width:23px;height:22px"><svg width="23" height="22" viewBox="0 0 23 22"><g fill="#fff" stroke="#A000A0"><rect x="3.500" y="4.500" width="6" height="6"/><rect x="3.500" y="11.500" width="6" height="6"/></g><g fill="#fff" stroke="#0000C0"><rect x="12.500" y="4.500" width="6" height="13"/></g><path d="M5.500 6v3M7.500 6v3M5 14.500h3M6.500 13v3M14 6.500h3M15.500 5v4M14 14.500h3M15.500 12v4" stroke="#000"/><path d="M9 9l3 2l-3 2z" fill="#E00000" stroke="#E00000"/></svg></div><div class="btn" style="left:903px;top:85px;width:23px;height:22px"><svg width="23" height="22" viewBox="0 0 23 22"><circle cx="10" cy="10" r="6.7" fill="#fff" stroke="#0000C0" stroke-width="1.5"/><path d="M6 8.500h2M8.500 6v4M11.500 6v4M12 8.500h2M6 12.500h2" stroke="#000"/><path d="M12 10.500l-2.500 2l2.500 2M13 10.500l2.500 2l-2.500 2" stroke="#000" fill="none" stroke-width=".8"/><path d="M14.824 14.824L18.500 18.300" stroke="#000" stroke-width="1.800"/></svg></div><div class="btn" style="left:932px;top:85px;width:23px;height:22px"><svg width="23" height="22" viewBox="0 0 23 22"><g transform="translate(1 1)" stroke="#fff" fill="none"></g><g stroke="#ACA899" fill="none"></g><g transform="translate(1 1)" fill="#fff"><path d="M8 4h10v4h-3l-2 6h3v4h-11v-4h3l2-6h-2z"/></g><g fill="#ACA899"><path d="M8 4h10v4h-3l-2 6h3v4h-11v-4h3l2-6h-2z"/></g></svg></div><div class="btn" style="left:955px;top:85px;width:23px;height:22px"><svg width="23" height="22" viewBox="0 0 23 22"><g transform="translate(1 1)" stroke="#fff" fill="none"></g><g stroke="#ACA899" fill="none"></g><g transform="translate(1 1)" fill="#fff"><path d="M6 4h11v3h-11zM6 15h11v3h-11zM10 8h3v3h2l-3.500 3l-3.500-3h2z"/></g><g fill="#ACA899"><path d="M6 4h11v3h-11zM6 15h11v3h-11zM10 8h3v3h2l-3.500 3l-3.500-3h2z"/></g></svg></div><div class="btn" style="left:984px;top:85px;width:23px;height:22px"><svg width="23" height="22" viewBox="0 0 23 22"><rect x="8.500" y="4.500" width="10" height="8" fill="#fff" stroke="#0000C0" stroke-width="1.300"/><rect x="4.500" y="10.500" width="6" height="6" fill="#fff" stroke="#0000C0" stroke-width="1.300"/><path d="M11 10.500l4-4M12.500 6.500h2.500v2.500" stroke="#0000C0" fill="none" stroke-width="1.100"/></svg></div><div class="btn" style="left:1007px;top:85px;width:23px;height:22px"><svg width="23" height="22" viewBox="0 0 23 22"><rect x="12.500" y="4.500" width="6" height="5" fill="#fff" stroke="#0000C0" stroke-width="1.300"/><rect x="4.500" y="8.500" width="10" height="8" fill="#fff" stroke="#0000C0" stroke-width="1.300"/><path d="M8 13.500l4-4M9.500 9.500h2.500v2.500" stroke="#0000C0" fill="none" stroke-width="1.100"/></svg></div><div class="btn" style="left:1036px;top:85px;width:23px;height:22px"><svg width="23" height="22" viewBox="0 0 23 22"><circle cx="10.5" cy="10.5" r="6.7" fill="#fff" stroke="#0000C0" stroke-width="1.5"/><rect x="7" y="11" width="6" height="3" fill="#F0F000" stroke="#000" stroke-width=".6"/><path d="M6 8.500h9M10 6v5" stroke="#000"/><rect x="8" y="7" width="4" height="2" fill="#F0F000" stroke="#000" stroke-width=".5"/><path d="M15.324 15.324L18.500 18.300" stroke="#000" stroke-width="1.800"/></svg></div><div class="btn" style="left:1065px;top:85px;width:23px;height:22px"><svg width="23" height="22" viewBox="0 0 23 22"><g transform="translate(1 1)" stroke="#fff" fill="none"><path d="M8.500 4v14M6 5.500h5M6 16.500h5M15.500 5v11"/></g><g stroke="#ACA899" fill="none"><path d="M8.500 4v14M6 5.500h5M6 16.500h5M15.500 5v11"/></g><g transform="translate(1 1)" fill="#fff"><rect x="6" y="8" width="5" height="2"/><rect x="6" y="12" width="5" height="2"/><path d="M13 13h5l-2.500 4z"/></g><g fill="#ACA899"><rect x="6" y="8" width="5" height="2"/><rect x="6" y="12" width="5" height="2"/><path d="M13 13h5l-2.500 4z"/></g></svg></div><div class="btn" style="left:1088px;top:85px;width:23px;height:22px"><svg width="23" height="22" viewBox="0 0 23 22"><g transform="translate(1 1)" stroke="#fff" fill="none"><path d="M8.500 4v14M6 5.500h5M6 16.500h5M15.500 7v9M13 7.500h5M13 16.500h5"/></g><g stroke="#ACA899" fill="none"><path d="M8.500 4v14M6 5.500h5M6 16.500h5M15.500 7v9M13 7.500h5M13 16.500h5"/></g><g transform="translate(1 1)" fill="#fff"><rect x="6" y="8" width="5" height="2"/><rect x="6" y="12" width="5" height="2"/><path d="M13.500 12h4l-2 3z"/></g><g fill="#ACA899"><rect x="6" y="8" width="5" height="2"/><rect x="6" y="12" width="5" height="2"/><path d="M13.500 12h4l-2 3z"/></g></svg></div><div class="btn" style="left:1111px;top:85px;width:23px;height:22px"><svg width="23" height="22" viewBox="0 0 23 22"><g transform="translate(1 1)" stroke="#fff" fill="none"><path d="M8.500 4v14M6 5.500h5M6 16.500h5M13 6.500h3.500v6M16.500 12v4"/></g><g stroke="#ACA899" fill="none"><path d="M8.500 4v14M6 5.500h5M6 16.500h5M13 6.500h3.500v6M16.500 12v4"/></g><g transform="translate(1 1)" fill="#fff"><rect x="6" y="8" width="5" height="2"/><rect x="6" y="12" width="5" height="2"/><path d="M14 14h5l-2.500 4z"/></g><g fill="#ACA899"><rect x="6" y="8" width="5" height="2"/><rect x="6" y="12" width="5" height="2"/><path d="M14 14h5l-2.500 4z"/></g></svg></div><div class="btn" style="left:1140px;top:85px;width:23px;height:22px"><svg width="23" height="22" viewBox="0 0 23 22"><rect x="5" y="5" width="13" height="10" fill="#0000C0"/><rect x="7" y="8" width="9" height="5" fill="#fff"/><path d="M9.500 9v3M11.500 9v3M13.500 9v3" stroke="#808080"/></svg></div><div class="vl" style="left:334px;top:82px;height:28px"></div><div class="vl" style="left:394px;top:82px;height:28px"></div><div class="vl" style="left:432px;top:82px;height:28px"></div><div class="vl" style="left:618px;top:82px;height:28px"></div>
<div class="abs" style="left:0;top:112px;width:215px;height:637px;border-right:1px solid #8A887A;border-bottom:1px solid #8A887A;box-shadow:inset -1px -1px 0 #D8D5C6,inset -2px -2px 0 #fff"></div><div class="abs" style="left:4px;top:118px;width:182px;height:3px;border:1px solid;border-color:#fff #ACA899 #ACA899 #fff"></div><div class="abs" style="left:4px;top:122px;width:182px;height:3px;border:1px solid;border-color:#fff #ACA899 #ACA899 #fff"></div><div class="btn" style="left:192px;top:115px;width:12px;height:12px;box-shadow:none"><svg width="12" height="12" viewBox="0 0 12 12"><path d="M3.500 3l5.500 5.500M9 3l-5.500 5.500" stroke="#000" stroke-width="1.700"/></svg></div><div class="abs" style="left:6px;top:136px;width:199px;height:588px;background:#fff;border:1px solid #716F64;box-shadow:inset 1px 1px 0 #ACA899"></div><svg class="abs" style="left:6px;top:136px" width="198" height="90" viewBox="6 136 198 90" shape-rendering="crispEdges">
<g stroke="#A0A0A0" stroke-dasharray="1 1" fill="none"><path d="M21.500 145.500H27M35.500 153V209.500H46M40 161.500H46M40 177.500H46M40 193.500H46"/></g>
<g fill="#fff" stroke="#848284"><rect x="12.500" y="140.500" width="8" height="8"/><rect x="31.500" y="156.500" width="8" height="8"/><rect x="31.500" y="172.500" width="8" height="8"/><rect x="31.500" y="188.500" width="8" height="8"/></g>
<g stroke="#000" fill="none"><path d="M14 144.500h5M33 160.500h5M35.500 158v5M33 176.500h5M35.500 174v5M33 192.500h5M35.500 190v5"/></g>
<rect x="27.500" y="137.500" width="14.500" height="14" fill="#20D020"/><path d="M27.500 151.500h14.500v-14" stroke="#108010" fill="none"/><path d="M29.500 145.500l4.500-4.500M35.500 140l3 2l2.500-2.500v8.500h-6.500" stroke="#103010" fill="none"/><path d="M28.500 145.500l2-2l2 2l-2 2z" fill="#40E0E0" stroke="#000" stroke-width=".5"/><circle cx="35" cy="139.800" r="1.300" fill="#E04080"/><circle cx="38" cy="146" r="1.600" fill="#FFE000" stroke="#000" stroke-width=".5"/><path d="M33.500 149.500h4.500" stroke="#C0A000"/>
<g>
<g id="doc1"><path d="M46.500 154.500h10l4 4v10h-14z" fill="#fff" stroke="#000"/><path d="M47 168.500h14M60.500 159v10" stroke="#000"/></g>
<path d="M48 158.500h3M53 158.500h5M48 162.500h3M53 162.500h5M52.500 156v9M50 165.500h6" stroke="#0000C0" fill="none"/>
<g><path d="M46.500 170.500h10l4 4v10h-14z" fill="#fff" stroke="#000"/><path d="M47 184.500h14M60.500 175v10" stroke="#000"/></g>
<rect x="48" y="172" width="4" height="4" fill="#808080"/><rect x="54" y="172" width="4" height="4" fill="#E0E000" stroke="#000" stroke-width=".5"/><path d="M50 176l3 3l3-3M53 179v4" stroke="#A000A0" fill="none"/><rect x="51.500" y="180.500" width="3" height="3" fill="#fff" stroke="#A000A0"/>
<g><path d="M46.500 186.500h10l4 4v10h-14z" fill="#fff" stroke="#000"/><path d="M47 200.500h14M60.500 191v10" stroke="#000"/></g>
<rect x="49" y="193" width="4" height="4" fill="#C03030"/><rect x="53" y="191" width="4" height="4" fill="#30A030"/><path d="M49 198l8-8" stroke="#30A030"/><rect x="52" y="195" width="3" height="3" fill="#E0E000"/>
<g><path d="M46.500 202.500h10l4 4v10h-14z" fill="#fff" stroke="#000"/><path d="M47 216.500h14M60.500 207v10" stroke="#000"/></g>
<rect x="48.500" y="204.500" width="7" height="8" fill="#fff" stroke="#0000A0"/><path d="M50 207.500h4M50 209.500h4" stroke="#0000A0"/><rect x="54" y="211" width="4" height="4" fill="#A04040" stroke="#000" stroke-width=".5"/>
</g>
</svg><div class="abs" style="left:47px;top:138px;height:14px;line-height:14px;font-size:12px;white-space:nowrap;font-family:'Liberation Sans',sans-serif;font-size:10.500px;letter-spacing:0.400px">081014</div><div class="abs" style="left:67px;top:154px;height:14px;line-height:14px;font-size:12px;white-space:nowrap;">程序</div><div class="abs" style="left:67px;top:170px;height:14px;line-height:14px;font-size:12px;white-space:nowrap;">软元件注释</div><div class="abs" style="left:67px;top:186px;height:14px;line-height:14px;font-size:12px;white-space:nowrap;">参数</div><div class="abs" style="left:67px;top:202px;height:14px;line-height:14px;font-size:12px;white-space:nowrap;">软元件内存</div><div class="abs" style="left:6px;top:719px;width:50px;height:24px;background:#ECE9D8;border:1px solid #716F64;border-top:0;border-left-color:#fff;border-radius:0 0 4px 2px;box-shadow:inset -1px -1px 0 #ACA899"></div><div class="abs" style="left:7px;top:719px;width:47px;height:5px;background:#ECE9D8"></div><div class="abs" style="left:12px;top:727px;line-height:14px;font-size:12px">工程</div>
<div class="abs" style="left:0;top:110px;width:1280px;height:1px;background:#C9C6B6"></div><div class="abs" style="left:0;top:111px;width:214px;height:1px;background:#fff"></div><div class="abs" style="left:214px;top:111px;width:1066px;height:1px;background:#716F64"></div><div class="abs" style="left:214px;top:111px;width:1066px;height:638px;background:#fff;border:1px solid;border-color:#716F64 #fff #fff #716F64;box-shadow:inset 1px 0 0 #ACA899"></div><svg class="abs" style="left:0;top:0" width="1280" height="800" viewBox="0 0 1280 800"><path d="M286.5 162V748M930.5 112V748M287 137.5H312M312.5 129V145M322.5 129V145M323 137.5H730M730.5 130V145M730 130.5H734M730 144.5H734M927.5 130V145M924 130.5H928M924 144.5H928M927 137.5H930M349.5 137V237M349 187.5H667M667.5 180V195M667 180.5H671M667 194.5H671M927.5 180V195M924 180.5H928M924 194.5H928M927 187.5H930M349 237.5H667M667.5 230V245M667 230.5H671M667 244.5H671M927.5 230V245M924 230.5H928M924 244.5H928M927 237.5H930M287 287.5H312M312.5 279V295M322.5 279V295M323 287.5H375M375.5 279V295M385.5 279V295M386 287.5H439M439.5 279V295M449.5 279V295M439 287.5H449M450 287.5H793M793.5 280V295M793 280.5H797M793 294.5H797M927.5 280V295M924 280.5H928M924 294.5H928M927 287.5H930M287 337.5H312M312.5 329V345M322.5 329V345M323 337.5H375M375.5 329V345M385.5 329V345M375 337.5H385M386 337.5H439M439.5 329V345M449.5 329V345M439 337.5H449M450 337.5H856M349.5 337V387M287 387.5H312M312.5 379V395M322.5 379V395M323 387.5H350M287 437.5H312M312.5 429V445M322.5 429V445M323 437.5H375M375.5 429V445M385.5 429V445M386 437.5H439M439.5 429V445M449.5 429V445M439 437.5H449M450 437.5H793M793.5 430V445M793 430.5H797M793 444.5H797M927.5 430V445M924 430.5H928M924 444.5H928M927 437.5H930M287 487.5H312M312.5 479V495M322.5 479V495M323 487.5H375M375.5 479V495M385.5 479V495M375 487.5H385M386 487.5H439M439.5 479V495M449.5 479V495M439 487.5H449M450 487.5H856M349.5 487V537M287 537.5H312M312.5 529V545M322.5 529V545M323 537.5H350M287 587.5H856M856.5 580V595M856 580.5H860M856 594.5H860M927.5 580V595M924 580.5H928M924 594.5H928M927 587.5H930" stroke="#000" stroke-width="1" fill="none" shape-rendering="crispEdges"/><path d="M433 295.5L452.5 280.5M369 345.5L388.5 330.5M433 345.5L452.5 330.5M859.5 330Q851.5 336.5 859.5 343M924.5 330Q934.5 337 924.5 344M433 445.5L452.5 430.5M369 495.5L388.5 480.5M433 495.5L452.5 480.5M859.5 480Q851.5 486.5 859.5 493M924.5 480Q934.5 487 924.5 494" stroke="#000" stroke-width="1" fill="none"/><path d="M287 112h63v50h-63zM288.500 114v46h58.500v-46z" fill="#000080" fill-rule="evenodd" shape-rendering="crispEdges"/><g style="font-family:'Liberation Mono',monospace;font-size:12.500px;letter-spacing:-0.500px" fill="#000" stroke="#000" stroke-width=".25"><text transform="translate(317.5 122.5) scale(1 1.00)" text-anchor="middle" >M8000</text><text transform="translate(734.5 139.0) scale(1 1.00)" text-anchor="start" >MOVP</text><text transform="translate(790.0 139.0) scale(1 1.00)" text-anchor="start" >K0</text><text transform="translate(860.0 139.0) scale(1 1.00)" text-anchor="start" >D3</text><text transform="translate(671.0 189.0) scale(1 1.00)" text-anchor="start" >CMP</text><text transform="translate(727.0 189.0) scale(1 1.00)" text-anchor="start" >K0</text><text transform="translate(790.0 189.0) scale(1 1.00)" text-anchor="start" >D3</text><text transform="translate(860.0 189.0) scale(1 1.00)" text-anchor="start" >M1</text><text transform="translate(671.0 239.0) scale(1 1.00)" text-anchor="start" >CMP</text><text transform="translate(727.0 239.0) scale(1 1.00)" text-anchor="start" >K10</text><text transform="translate(790.0 239.0) scale(1 1.00)" text-anchor="start" >D3</text><text transform="translate(860.0 239.0) scale(1 1.00)" text-anchor="start" >M3</text><text transform="translate(317.5 272.5) scale(1 1.00)" text-anchor="middle" >M10</text><text transform="translate(380.5 272.5) scale(1 1.00)" text-anchor="middle" >M8013</text><text transform="translate(444.5 272.5) scale(1 1.00)" text-anchor="middle" >M4</text><text transform="translate(797.0 289.0) scale(1 1.00)" text-anchor="start" >INC</text><text transform="translate(860.0 289.0) scale(1 1.00)" text-anchor="start" >D3</text><text transform="translate(317.5 322.5) scale(1 1.00)" text-anchor="middle" >M2</text><text transform="translate(380.5 322.5) scale(1 1.00)" text-anchor="middle" >M11</text><text transform="translate(444.5 322.5) scale(1 1.00)" text-anchor="middle" >M4</text><text transform="translate(860.0 339.0) scale(1 1.00)" text-anchor="start" >M10</text><text transform="translate(317.5 372.5) scale(1 1.00)" text-anchor="middle" >M10</text><text transform="translate(317.5 422.5) scale(1 1.00)" text-anchor="middle" >M11</text><text transform="translate(380.5 422.5) scale(1 1.00)" text-anchor="middle" >M8013</text><text transform="translate(444.5 422.5) scale(1 1.00)" text-anchor="middle" >M2</text><text transform="translate(797.0 439.0) scale(1 1.00)" text-anchor="start" >DEC</text><text transform="translate(860.0 439.0) scale(1 1.00)" text-anchor="start" >D3</text><text transform="translate(317.5 472.5) scale(1 1.00)" text-anchor="middle" >M4</text><text transform="translate(380.5 472.5) scale(1 1.00)" text-anchor="middle" >M10</text><text transform="translate(444.5 472.5) scale(1 1.00)" text-anchor="middle" >M2</text><text transform="translate(860.0 489.0) scale(1 1.00)" text-anchor="start" >M11</text><text transform="translate(317.5 522.5) scale(1 1.00)" text-anchor="middle" >M11</text><text transform="translate(860.0 589.0) scale(1 1.00)" text-anchor="start" >END</text></g><g style="font-family:'Liberation Sans',sans-serif;font-size:12px;letter-spacing:.5px" fill="#000" stroke="#000" stroke-width=".2"><text transform="translate(283.5 139.0) scale(1 1.00)" text-anchor="end" >0</text><text transform="translate(283.5 289.0) scale(1 1.00)" text-anchor="end" >20</text><text transform="translate(283.5 339.0) scale(1 1.00)" text-anchor="end" >26</text><text transform="translate(283.5 439.0) scale(1 1.00)" text-anchor="end" >31</text><text transform="translate(283.5 489.0) scale(1 1.00)" text-anchor="end" >37</text><text transform="translate(283.5 589.0) scale(1 1.00)" text-anchor="end" >42</text></g></svg><div class="abs" style="left:1262px;top:112px;width:17px;height:637px;background:linear-gradient(to right,#F3F1EC,#FDFDFB);border-left:1px solid #EEEDE5"></div><div class="abs" style="left:1262px;top:112px;width:16px;height:16px;background:linear-gradient(to right,#C9D7FC,#B9CBF8);border:1px solid #fff;border-radius:2px;box-shadow:0 0 0 1px #B4C4F0 inset"><svg width="14" height="14" viewBox="-.5 0 14 14"><path d="M3 8.500l3.500-3.500l3.500 3.500" stroke="#4D6185" stroke-width="2" fill="none"/></svg></div><div class="abs" style="left:1262px;top:129px;width:16px;height:16px;background:linear-gradient(to right,#C9D7FC,#B9CBF8);border:1px solid #fff;border-radius:2px;box-shadow:0 0 0 1px #B4C4F0 inset"><svg width="14" height="14" viewBox="-.5 0 14 14"><path d="M4 4.500h5M4 6.500h5M4 8.500h5M4 10.500h5" stroke="#EEF4FE" fill="none"/></svg></div><div class="abs" style="left:1262px;top:732px;width:16px;height:16px;background:linear-gradient(to right,#C9D7FC,#B9CBF8);border:1px solid #fff;border-radius:2px;box-shadow:0 0 0 1px #B4C4F0 inset"><svg width="14" height="14" viewBox="-.5 0 14 14"><path d="M3 5l3.500 3.500l3.500-3.500" stroke="#4D6185" stroke-width="2" fill="none"/></svg></div>
<div class="abs" style="left:0;top:750px;width:1280px;height:20px;background:#ECE9D8;border-top:1px solid #fff"></div><div class="abs" style="left:2px;top:754px;line-height:14px;font-size:12px">准备完毕</div><div class="abs" style="left:733px;top:753px;width:85px;height:16px;border:1px solid;border-color:#ACA899 #fff #fff #ACA899;padding-left:2px;line-height:14px;font-size:11px;letter-spacing:-.6px;font-family:'Liberation Mono','Noto Sans CJK SC',monospace;">FX2N(C)</div><div class="abs" style="left:821px;top:753px;width:157px;height:16px;border:1px solid;border-color:#ACA899 #fff #fff #ACA899;padding-left:2px;line-height:14px;font-size:12px;">本站</div><div class="abs" style="left:1018px;top:753px;width:75px;height:16px;border:1px solid;border-color:#ACA899 #fff #fff #ACA899;padding-left:2px;line-height:14px;font-size:12px;"></div><div class="abs" style="left:1095px;top:753px;width:57px;height:16px;border:1px solid;border-color:#ACA899 #fff #fff #ACA899;padding-left:2px;line-height:14px;font-size:12px;">改写</div><div class="abs" style="left:1154px;top:753px;width:41px;height:16px;border:1px solid;border-color:#ACA899 #fff #fff #ACA899;padding-left:2px;line-height:14px;font-size:12px;"></div><div class="abs" style="left:1198px;top:753px;width:23px;height:16px;border:1px solid;border-color:#ACA899 #fff #fff #ACA899;padding-left:2px;line-height:14px;font-size:12px;"></div><div class="abs" style="left:1224px;top:753px;width:23px;height:16px;border:1px solid;border-color:#ACA899 #fff #fff #ACA899;padding-left:2px;line-height:14px;font-size:12px;"></div><div class="abs" style="left:1250px;top:753px;width:28px;height:16px;border:1px solid;border-color:#ACA899 #fff #fff #ACA899;padding-left:2px;line-height:14px;font-size:12px;"></div>
<div class="abs" style="left:0;top:770px;width:1280px;height:30px;background:linear-gradient(to bottom,#3168D5 0%,#4993E6 4%,#3B80EC 8%,#2B71E4 13%,#2663DA 20%,#245DDB 50%,#2562DF 75%,#245DDB 88%,#1F52C0 96%,#1941A5 100%)"></div><div class="abs" style="left:0;top:770px;width:97px;height:30px;border-radius:0 9px 9px 0/0 14px 14px 0;background:radial-gradient(ellipse 60% 70% at 50% 45%,rgba(90,185,90,.55),rgba(90,185,90,0) 100%),linear-gradient(to bottom,#2F7F30 0%,#4FA550 7%,#409840 14%,#379037 30%,#358D35 60%,#3A953A 82%,#2E802E 93%,#1F5E20 100%);box-shadow:2px 0 3px rgba(0,0,60,.45),inset -2px 0 3px rgba(20,70,20,.5)"></div><svg class="abs" style="left:10px;top:774px" width="21" height="20" viewBox="0 0 21 20"><g transform="rotate(-6 10 10)"><path d="M3 3q3-2 7 0l-1 6q-4-2-7 0z" fill="#E8642C"/><path d="M11 3.500q4 2 8 0l-1 6q-4 2-8 0z" fill="#7DC242"/><path d="M1.800 10q3-2 7 0l-1 6q-4-2-7 0z" fill="#4C7EE8"/><path d="M9.800 10.500q4 2 8 0l-1 6q-4 2-8 0z" fill="#F5D42C"/></g></svg><div class="abs" style="left:38px;top:771px;line-height:26px;font-size:18px;-webkit-text-stroke-width:0;font-weight:400;color:#fff;text-shadow:1px 1px 1px #1A4A1A;transform:skewX(-14deg);font-family:'Liberation Sans','Noto Sans CJK SC',sans-serif">开始</div><div class="abs" style="left:107px;top:774px;width:158px;height:23px;border-radius:3px;background:linear-gradient(to bottom,#5A9CF8 0%,#3C81F3 12%,#3A7DEF 80%,#3272E4 100%);box-shadow:inset 1px 1px 0 #6AA8FA"></div><svg class="abs" style="left:115px;top:776px" width="20" height="19" viewBox="0 0 20 19"><circle cx="10" cy="10" r="5.500" fill="none" stroke="#1A6AD8" stroke-width="4.200"/><circle cx="10" cy="10" r="5.500" fill="none" stroke="#62C4FA" stroke-width="3"/><path d="M5.500 10h10" stroke="#62C4FA" stroke-width="2.400"/><path d="M11.500 11.300h6.500v3.500h-4z" fill="#3C81F3"/><path d="M2 17q-2.500-5 5-11.500q6-5 10.500-3" stroke="#F0B830" stroke-width="1.600" fill="none"/></svg><div class="abs" style="left:136px;top:778px;line-height:14px;font-size:12px;color:#fff;white-space:pre;">编程讨论<span style="font-family:'Liberation Mono',monospace;font-size:10px">: </span>让数值<span style="font-family:'Liberation Mono',monospace;font-size:10px">...</span></div><div class="abs" style="left:267px;top:774px;width:158px;height:23px;border-radius:3px;background:linear-gradient(to bottom,#5A9CF8 0%,#3C81F3 12%,#3A7DEF 80%,#3272E4 100%);box-shadow:inset 1px 1px 0 #6AA8FA"></div><svg class="abs" style="left:276px;top:778px" width="16" height="14" viewBox="0 0 16 14"><path d="M1 2.500q0-1 1-1h4l1.500 1.500h6q1 0 1 1v7.500q0 1-1 1h-11.500q-1 0-1-1z" fill="#F5D76A" stroke="#B8922A"/><path d="M1 5h14" stroke="#FBEFA8"/></svg><div class="abs" style="left:296px;top:778px;line-height:14px;font-size:12px;color:#fff;white-space:pre;font-family:'Liberation Sans',sans-serif;font-size:10.500px;letter-spacing:.4px;">081014</div><div class="abs" style="left:428px;top:774px;width:158px;height:23px;border-radius:3px;background:linear-gradient(to bottom,#1A4AAE 0%,#1E52B7 15%,#2055BE 85%,#2A62CC 100%);box-shadow:inset 1px 1px 1px #163C90"></div><svg class="abs" style="left:436px;top:776px" width="18" height="18" viewBox="0 0 18 18"><polygon points="1,5 6,1.500 12,1 17,5 17,12.500 11,17.500 5,17 1,13" fill="#1a0808"/><polygon points="2,5.500 7,3.500 8.500,9 8,15.500 5,16 2,12.500" fill="#D8181C"/><path d="M9 7h7.500v3.500l-2 5h-4.500l-1-3z" fill="#F4F0F0"/><path d="M12 8h3v2.500h-3z" fill="#402030"/><path d="M13 12l3.500-1l-2 4.500l-3 .5z" fill="#A8A040"/></svg><div class="abs" style="left:457px;top:778px;line-height:14px;font-size:12px;color:#fff;white-space:pre;font-family:'Liberation Mono','Noto Sans CJK SC',monospace;font-size:11px;letter-spacing:-.6px;">MELSOFT系列 GX D...</div><div class="abs" style="left:1185px;top:770px;width:95px;height:30px;background:linear-gradient(to bottom,#0C59B9 0%,#139EE9 6%,#18B5F2 10%,#139BE6 16%,#1290E8 25%,#0D8DEA 60%,#0F9EEE 85%,#0F8AD8 94%,#095BC9 100%);border-left:1px solid #0E53B0;box-shadow:inset 1px 0 0 #18A8F5"></div><div class="abs" style="left:1176px;top:776px;width:19px;height:19px;border-radius:50%;background:radial-gradient(circle at 40% 35%,#7CC0FF,#2A78E4 70%,#1A5CC8);box-shadow:0 0 1px #0A2A80"></div><svg class="abs" style="left:1180px;top:780px" width="10" height="11" viewBox="0 0 10 11"><path d="M7 1.500l-4 4l4 4" stroke="#fff" stroke-width="2" fill="none"/></svg><svg class="abs" style="left:1110px;top:778px" width="20" height="15" viewBox="0 0 20 15"><path d="M6 3.500q1-1.500 2 0t2 0t2 0t2 0" stroke="#000" fill="none"/><rect x="2.500" y="5.500" width="15" height="8" rx="1" fill="#fff" stroke="#000" stroke-width="1.200"/><path d="M4.500 9.500h11" stroke="#000" stroke-width="3" stroke-dasharray="1.200 .8"/><path d="M4.500 11h11" stroke="#E06080" stroke-dasharray="1.200 .8"/></svg><div class="abs" style="left:1135px;top:778px;width:14px;height:13px;background:#FFFFE1;border:1px solid #000;border-width:1px 2px 2px 1px;font:bold 12px/10px 'Liberation Sans',sans-serif;text-align:center;color:#000;-webkit-text-stroke-width:.3px">?</div><svg class="abs" style="left:1141px;top:789px" width="6" height="5" viewBox="0 0 6 5"><path d="M0 0h5l-2.500 3.500z" fill="#FFFFE1" stroke="#000" stroke-width=".8"/><path d="M.500 0h4" stroke="#FFFFE1" stroke-width="1.500"/></svg><svg class="abs" style="left:1158px;top:775px" width="12" height="20" viewBox="0 0 12 20"><rect x="4.500" y="1.500" width="6" height="3.500" fill="none" stroke="#fff" stroke-width="1.200"/><rect x="2.500" y="3.500" width="6" height="3.500" fill="#245DDB" stroke="#fff" stroke-width="1.200"/><path d="M3 14h6l-3 3z" fill="#fff"/></svg><div class="abs" style="left:1197px;top:777px;width:16px;height:16px;background:#1830A0;border:1px solid #F0E890"></div><div class="abs" style="left:1201px;top:779px;width:8px;height:12px;background:#fff;border-radius:3px 3px 4px 4px"></div><svg class="abs" style="left:1214px;top:776px" width="17" height="18" viewBox="0 0 17 18"><ellipse cx="8.500" cy="10" rx="6" ry="7" fill="#111"/><ellipse cx="8.500" cy="6" rx="4.500" ry="4.500" fill="#111"/><ellipse cx="8.500" cy="12" rx="3.500" ry="4.500" fill="#fff"/><path d="M3 10q5.500 3 11 0l0 2q-5.500 3-11 0z" fill="#E02020"/><ellipse cx="8.500" cy="7.500" rx="2.500" ry="1" fill="#F0A020"/><ellipse cx="5" cy="16.500" rx="2.500" ry="1.200" fill="#F0A020"/><ellipse cx="12" cy="16.500" rx="2.500" ry="1.200" fill="#F0A020"/><circle cx="7" cy="5" r="1" fill="#fff"/><circle cx="10" cy="5" r="1" fill="#fff"/></svg><div class="abs" style="left:1236px;top:778px;line-height:14px;font-size:11px;color:#fff;font-family:'Liberation Sans',sans-serif;letter-spacing:.6px">22:32</div>
</div>
</body></html>
